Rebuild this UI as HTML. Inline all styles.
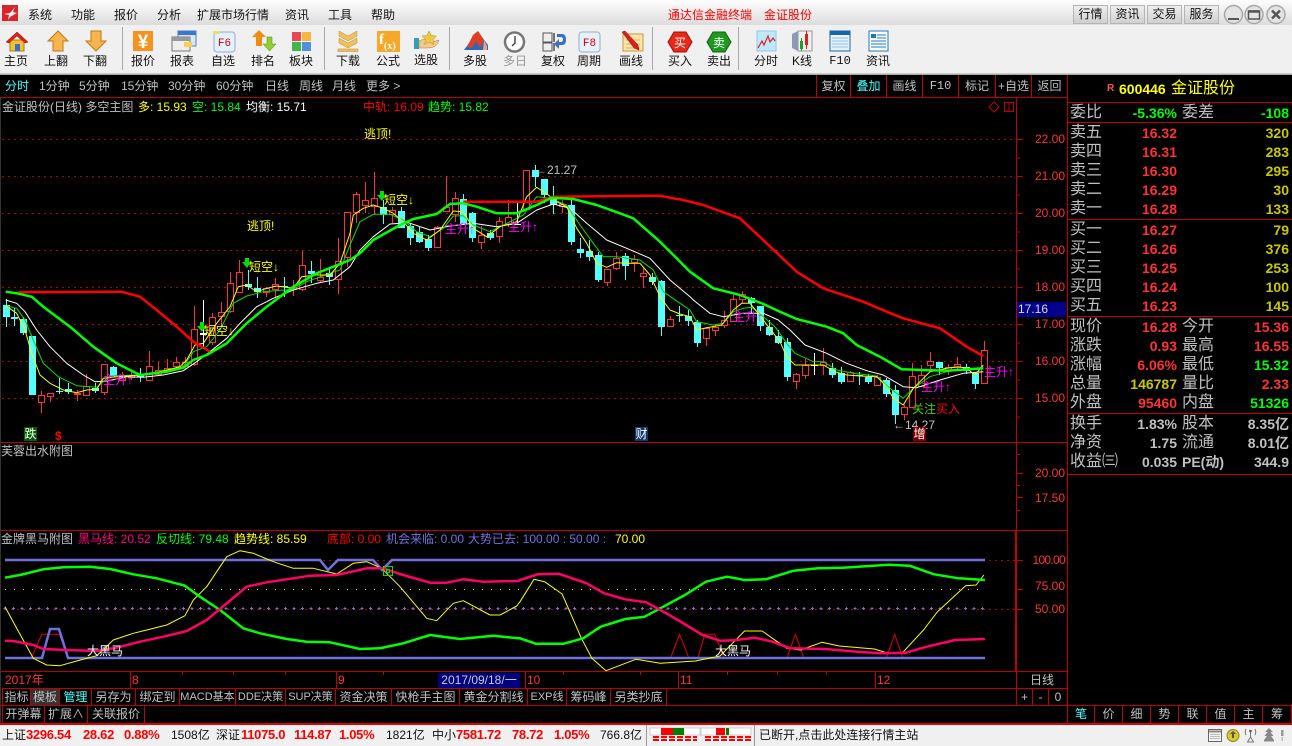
<!DOCTYPE html>
<html><head><meta charset="utf-8"><title>通达信金融终端</title>
<style>
html,body{margin:0;padding:0;background:#000;width:1292px;height:746px;overflow:hidden}
body{position:relative;font:12px "Liberation Sans","WenQuanYi Zen Hei","Noto Sans CJK SC",sans-serif;color:#c0c0c0}
.a{position:absolute}
.t{position:absolute;white-space:nowrap;line-height:16px;height:16px}
.r{text-align:right}
.c{text-align:center;transform:translateX(-50%)}
.h{background:#c00000;position:absolute}
.k{color:#111;font-size:12px}
.big{font-size:16px;color:#c0c0c0}
.n{font-size:14px;font-weight:bold;text-align:right}
.cell{position:absolute;text-align:center;line-height:17px;white-space:nowrap;border-right:1px solid #c00000;box-sizing:border-box}
.tb{color:#111;font-size:12px;transform:translateX(-50%)}
.ax{color:#ff3232;width:40px;text-align:right;left:1025px}
.m{color:#111;font-size:12px}
.s{color:#f00;font-weight:bold;font-size:13px;letter-spacing:-.3px}
.st{color:#111;font-size:12px}
.btn{position:absolute;top:5px;height:19px;box-sizing:border-box;border:1px solid #b4b4b4;background:linear-gradient(#eee,#d0d0d0);text-align:center;line-height:17px;color:#111}
</style></head><body>

<div class="a" style="left:0;top:0;width:1292px;height:25px;background:linear-gradient(#fefefe,#dcdcdc)"></div>
<div class="a" style="left:0;top:25px;width:1292px;height:47px;background:#f0f0f0"></div>
<div class="a" style="left:0;top:72px;width:1292px;height:3px;background:linear-gradient(#fff,#999)"></div>

<svg class="a" style="left:2px;top:5px" width="17" height="17"><rect width="16" height="16" fill="#d8262a"/><path d="M2 9 L8 8 L13 2 L11 7 L15 8 L8 12 L6 15 L7 10 Z" fill="#eee"/></svg>
<span class="t m" style="left:28px;top:7px">系统</span><span class="t m" style="left:71px;top:7px">功能</span><span class="t m" style="left:114px;top:7px">报价</span><span class="t m" style="left:157px;top:7px">分析</span><span class="t m" style="left:197px;top:7px">扩展市场行情</span><span class="t m" style="left:285px;top:7px">资讯</span><span class="t m" style="left:328px;top:7px">工具</span><span class="t m" style="left:371px;top:7px">帮助</span>
<span class="t" style="left:668px;top:7px;color:#f00">通达信金融终端</span><span class="t" style="left:764px;top:7px;color:#f00">金证股份</span>
<div class="btn" style="left:1073px;width:35px">行情</div><div class="btn" style="left:1110px;width:35px">资讯</div><div class="btn" style="left:1147px;width:35px">交易</div><div class="btn" style="left:1184px;width:35px">服务</div>
<svg class="a" style="left:1221px;top:3px" width="70" height="22">
<g fill="#e4e4e4" stroke="#a8a8a8" stroke-width="1.5"><circle cx="12.5" cy="11.500" r="9"/><circle cx="33" cy="11.500" r="9"/><circle cx="55" cy="11.500" r="9"/></g>
<path d="M7 16h11" stroke="#555" stroke-width="2"/><rect x="27.500" y="8" width="11" height="8" fill="none" stroke="#555" stroke-width="1.500"/><path d="M27.500 8.500h11" stroke="#555" stroke-width="2.500"/><path d="M51 7.500l8 8M59 7.500l-8 8" stroke="#555" stroke-width="2.500"/></svg>

<!-- toolbar icons -->
<svg class="a" style="left:0;top:25px" width="900" height="47">
<g stroke="#a8a8a8"><path d="M122.500 2v43M324.500 2v43M449.500 2v43M652.500 2v43M738.500 2v43"/></g>
<g transform="translate(6,6)"><rect x="4" y="9" width="14" height="11" fill="#f2c230" stroke="#a87a10"/><rect x="9" y="13" width="5" height="7" fill="#3b6fc0"/><path d="M0 11 L11 1 L22 11 L19 12 L11 5 L3 12Z" fill="#d8221e" stroke="#901010" stroke-width=".5"/></g>
<g transform="translate(47,6)"><path d="M11 0 L21 10 H16 V20 H6 V10 H1Z" fill="#fbb44c" stroke="#b87a20"/></g>
<g transform="translate(85,6)"><path d="M6 0 H16 V10 H21 L11 20 L1 10 H6Z" fill="#fbb44c" stroke="#b87a20"/></g>
<g transform="translate(133,6)"><rect width="20" height="20" fill="#f6921e"/><text x="10" y="17" font-size="19" font-weight="bold" fill="#fff" text-anchor="middle" font-family="Liberation Sans">¥</text></g>
<g transform="translate(172,6)"><rect x="6" y="0" width="18" height="15" fill="#d8e8f8" stroke="#4a80c0"/><rect x="6" y="0" width="18" height="4" fill="#3a78c8"/><rect x="0" y="6" width="18" height="14" fill="#eee" stroke="#777"/><rect x="0" y="6" width="18" height="4" fill="#999"/><rect x="12" y="11" width="8" height="5" fill="#f8d050"/></g>
<g transform="translate(213,6)"><rect x="1" y="1" width="21" height="20" rx="3" fill="#e4f0fc" stroke="#8ab0d8"/><text x="11.500" y="15" font-size="11" fill="#e00000" text-anchor="middle" font-family="Liberation Mono">F6</text><path d="M0 0h6v3h-6z" fill="#f0e060"/></g>
<g transform="translate(252,5)"><path d="M7 0 L14 7 H10 V16 H4 V7 H0Z" fill="#f08c10"/><path d="M15 7 H20 V14 H24 L17.500 21 L11 14 H15Z" fill="#90d030" stroke="#608010" stroke-width=".5"/></g>
<g transform="translate(292,7)"><rect width="9" height="9" fill="#e84850"/><rect x="10" width="9" height="9" fill="#f8b840"/><rect y="10" width="9" height="9" fill="#40b848"/><rect x="10" y="10" width="9" height="9" fill="#5090e0"/></g>
<g transform="translate(338,6)" fill="#f0c060" stroke="#c08820" stroke-width=".5"><path d="M1 0 L10 5 L19 0 V5 L10 10 L1 5Z"/><path d="M1 7 L10 12 L19 7 V12 L10 17 L1 12Z"/><rect x="0" y="18" width="20" height="2.500"/></g>
<g transform="translate(377,6)"><rect width="23" height="21" fill="#f8a828"/><text x="2" y="13" font-size="15" font-weight="bold" fill="#fff" font-family="Liberation Serif">f</text><text x="7" y="18" font-size="10" font-weight="bold" fill="#fff" font-family="Liberation Serif">(x)</text></g>
<g transform="translate(414,6)"><rect x="0" y="7" width="5" height="11" fill="#30a0b8"/><path d="M5 10 Q12 6 18 11 L25 9 Q23 17 14 17 L5 17Z" fill="#f0c890" stroke="#b08040" stroke-width=".5"/><path d="M15 0l2.500 4.500 5 .5-3.500 3.500 1 5-5-2.500-4.500 2.500 1-5-3.500-3.500 5-.5z" fill="#f0c840" stroke="#b89020" stroke-width=".5"/></g>
<g transform="translate(464,6)"><path d="M0 19 L8 8 L15 2 L24 14 V19Z" fill="#2868c0"/><path d="M3 16 L9 4 L14 0 L20 9 L16 17 L12 10 L8 17Z" fill="#e04020"/><path d="M20 9l3 6v4h-4z" fill="#f0a080"/></g>
<g transform="translate(504,6)"><circle cx="10.500" cy="11" r="9.500" fill="#fff" stroke="#777" stroke-width="2.500"/><path d="M11 5v7l-3 3" stroke="#333" fill="none" stroke-width="1.300"/></g>
<g transform="translate(542,6)"><rect x="1" y="2" width="9" height="9" fill="#eee" stroke="#555"/><rect x="11" y="2" width="2" height="9" fill="#777"/><rect x="1" y="12" width="9" height="8" fill="#eee" stroke="#555"/><rect x="11" y="12" width="2" height="8" fill="#777"/><path d="M15 3 H20 Q24 3 24 9 Q24 14 20 14 H17 V18 L12 13 L17 8 V11 H19 Q21 11 21 8 Q21 6 18 6 H15Z" fill="#3a70c0"/></g>
<g transform="translate(579,6)"><rect x="0" y="1" width="21" height="20" rx="3" fill="#e8f0fa" stroke="#8ab0d8"/><text x="10.500" y="15" font-size="11" fill="#e00000" text-anchor="middle" font-family="Liberation Mono">F8</text></g>
<g transform="translate(621,6)"><rect x="2" y="3" width="20" height="17" fill="#fbe6a8" stroke="#c89838"/><path d="M5 9h14M5 13h14M5 17h14" stroke="#d8b058"/><path d="M1 1 L4 0 L17 14 L18 19 L13 17Z" fill="#d82020" stroke="#801010" stroke-width=".5"/></g>
<g transform="translate(668,7)"><path d="M6 0H18L24 10L18 20H6L0 10Z" fill="#e82818" stroke="#a01008"/><text x="12" y="15" font-size="12" fill="#fff" text-anchor="middle">买</text></g>
<g transform="translate(707,7)"><path d="M6 0H18L24 10L18 20H6L0 10Z" fill="#209820" stroke="#106010"/><text x="12" y="15" font-size="12" fill="#fff" text-anchor="middle">卖</text></g>
<g transform="translate(757,6)"><rect width="19" height="20" fill="#bfe8fb" stroke="#90c8e8"/><path d="M1 17 L5 10 L7 14 L11 5 L13 11 L16 7 L18 10" fill="none" stroke="#e02020" stroke-width="1.200"/></g>
<g transform="translate(792,6)"><path d="M0 3 L6 0 V20 L0 17Z" fill="#8a9ab8"/><path d="M6 0 H20 V20 H6Z" fill="#f0f0f0" stroke="#999"/><rect x="8" y="10" width="3" height="8" fill="#20a020"/><path d="M9.500 7v13" stroke="#20a020"/><rect x="13" y="3" width="3" height="11" fill="#e02020"/><path d="M14.500 0v18" stroke="#e02020"/></g>
<g transform="translate(830,6)"><rect width="20" height="20" fill="#e8f2fc" stroke="#1a64a8"/><rect width="20" height="4" fill="#1a64a8"/><path d="M2 7h16M2 10h16M2 13h16M2 16h16" stroke="#8cc0e8"/></g>
<g transform="translate(869,6)"><rect width="19" height="20" fill="#fff" stroke="#1a78c0"/><rect x="2" y="3" width="5" height="4" fill="#1a78c0"/><path d="M8 4h9M8 7h9M2 10h15M2 13h15M2 16h15" stroke="#1a78c0"/></g>
</svg>
<span class="t tb" style="left:16px;top:53px">主页</span><span class="t tb" style="left:56px;top:53px">上翻</span><span class="t tb" style="left:95px;top:53px">下翻</span><span class="t tb" style="left:143px;top:53px">报价</span><span class="t tb" style="left:182px;top:53px">报表</span><span class="t tb" style="left:223px;top:53px">自选</span><span class="t tb" style="left:263px;top:53px">排名</span><span class="t tb" style="left:301px;top:53px">板块</span><span class="t tb" style="left:348px;top:53px">下载</span><span class="t tb" style="left:388px;top:53px">公式</span><span class="t tb" style="left:426px;top:52px">选股</span><span class="t tb" style="left:475px;top:53px">多股</span><span class="t tb" style="left:515px;top:53px;color:#999">多日</span><span class="t tb" style="left:553px;top:53px">复权</span><span class="t tb" style="left:589px;top:53px">周期</span><span class="t tb" style="left:631px;top:53px">画线</span><span class="t tb" style="left:680px;top:53px">买入</span><span class="t tb" style="left:719px;top:53px">卖出</span><span class="t tb" style="left:766px;top:53px">分时</span><span class="t tb" style="left:802px;top:53px">K线</span><span class="t tb" style="left:840px;top:53px;font-family:'Liberation Mono'">F10</span><span class="t tb" style="left:878px;top:53px">资讯</span>

<!-- tab bar -->
<span class="t" style="left:5px;top:78px;color:#4ff">分时</span><span class="t" style="left:39px;top:78px">1分钟</span><span class="t" style="left:79px;top:78px">5分钟</span><span class="t" style="left:121px;top:78px">15分钟</span><span class="t" style="left:168px;top:78px">30分钟</span><span class="t" style="left:216px;top:78px">60分钟</span><span class="t" style="left:265px;top:78px">日线</span><span class="t" style="left:299px;top:78px">周线</span><span class="t" style="left:332px;top:78px">月线</span><span class="t" style="left:366px;top:78px">更多 &gt;</span>
<div class="cell" style="left:816px;top:75px;width:35px;height:22px;line-height:22px;border-left:1px solid #c00000;">复权</div><div class="cell" style="left:851px;top:75px;width:36px;height:22px;line-height:22px;color:#4ff">叠加</div><div class="cell" style="left:887px;top:75px;width:36px;height:22px;line-height:22px">画线</div><div class="cell" style="left:923px;top:75px;width:36px;height:22px;line-height:22px;font-family:'Liberation Mono'">F10</div><div class="cell" style="left:959px;top:75px;width:37px;height:22px;line-height:22px">标记</div><div class="cell" style="left:996px;top:75px;width:36px;height:22px;line-height:22px">+自选</div><div class="cell" style="left:1032px;top:75px;width:36px;height:22px;line-height:22px">返回</div>

<svg id="ch" class="a" style="left:0;top:0" width="1292" height="746"></svg>

<!-- legends -->
<span class="t" style="left:2px;top:99px">金证股份(日线) 多空主图</span>
<span class="t" style="left:138px;top:99px;color:#ff0">多: 15.93</span><span class="t" style="left:192px;top:99px;color:#0f0">空: 15.84</span><span class="t" style="left:246px;top:99px;color:#fff">均衡: 15.71</span><span class="t" style="left:363px;top:99px;color:#f00">中轨: 16.09</span><span class="t" style="left:428px;top:99px;color:#0f0">趋势: 15.82</span>
<span class="t" style="left:364px;top:126px;color:#ff0">逃顶!</span><span class="t" style="left:247px;top:218px;color:#ff0">逃顶!</span>
<span class="t" style="left:249px;top:259px;color:#ff0">短空↓</span><span class="t" style="left:204px;top:323px;color:#ff0">短空↓</span><span class="t" style="left:384px;top:192px;color:#ff0">短空↓</span>
<span class="t" style="left:103px;top:372px;color:#f0f">主升↑</span><span class="t" style="left:445px;top:221px;color:#f0f">主升↑</span><span class="t" style="left:508px;top:219px;color:#f0f">主升↑</span><span class="t" style="left:733px;top:309px;color:#f0f">主升↑</span><span class="t" style="left:921px;top:379px;color:#f0f">主升↑</span><span class="t" style="left:984px;top:364px;color:#f0f">主升↑</span>
<span class="t" style="left:535px;top:162px;color:#c0c0c0">←21.27</span><span class="t" style="left:893px;top:417px;color:#c0c0c0">←14.27</span>
<span class="t" style="left:912px;top:401px;color:#f00">关注买入</span>
<span class="t" style="left:912px;top:401px;color:#0f0;width:24px;overflow:hidden;opacity:.8">关注</span>
<span class="t" style="left:24px;top:427px;background:#006000;color:#fff;width:13px;height:14px;line-height:14px;text-align:center">跌</span>
<span class="t" style="left:55px;top:428px;color:#f00;font-weight:bold">$</span>
<span class="t" style="left:635px;top:427px;background:#103870;color:#fff;width:13px;height:14px;line-height:14px;text-align:center">财</span>
<span class="t" style="left:913px;top:427px;background:#800000;color:#fff;width:13px;height:14px;line-height:14px;text-align:center">增</span>
<span class="t" style="left:1px;top:443px">芙蓉出水附图</span>
<span class="t" style="left:1px;top:531px">金牌黑马附图</span>
<span class="t" style="left:78px;top:531px;color:#ff0080">黑马线: 20.52</span><span class="t" style="left:156px;top:531px;color:#0f0">反切线: 79.48</span><span class="t" style="left:234px;top:531px;color:#ff0">趋势线: 85.59</span><span class="t" style="left:327px;top:531px;color:#f00">底部: 0.00</span><span class="t" style="left:386px;top:531px;color:#7070e0">机会来临: 0.00</span><span class="t" style="left:468px;top:531px;color:#7070e0">大势已去: 100.00 : 50.00 :</span><span class="t" style="left:615px;top:531px;color:#ff0">70.00</span>
<span class="t" style="left:87px;top:643px;color:#fff">大黑马</span><span class="t" style="left:715px;top:643px;color:#fff">大黑马</span>

<!-- axis labels -->
<span class="t ax" style="top:131px">22.00</span><span class="t ax" style="top:168px">21.00</span><span class="t ax" style="top:205px">20.00</span><span class="t ax" style="top:242px">19.00</span><span class="t ax" style="top:279px">18.00</span><span class="t ax" style="top:316px">17.00</span><span class="t ax" style="top:353px">16.00</span><span class="t ax" style="top:390px">15.00</span>
<span class="t ax" style="top:465px">20.00</span><span class="t ax" style="top:490px">17.50</span>
<span class="t ax" style="top:552px;letter-spacing:-.7px">100.00</span><span class="t ax" style="top:578px">75.00</span><span class="t ax" style="top:601px">50.00</span>
<div class="a" style="left:1017px;top:302px;width:49px;height:15px;background:#00008b;color:#ddd;line-height:15px;text-indent:1px">17.16</div>
<svg class="a" style="left:988px;top:101px" width="28" height="12"><path d="M1 6 L6 1 L11 6 L6 11Z" fill="none" stroke="#c00000"/><path d="M16.500 1.500h9v9h-9zM21 1.500v9" fill="none" stroke="#c00000"/></svg>

<!-- time axis -->
<span class="t" style="left:5px;top:672px;color:#ff3232">2017年</span><span class="t" style="left:132px;top:672px;color:#ff3232">8</span><span class="t" style="left:338px;top:672px;color:#ff3232">9</span><span class="t" style="left:527px;top:672px;color:#ff3232">10</span><span class="t" style="left:680px;top:672px;color:#ff3232">11</span><span class="t" style="left:877px;top:672px;color:#ff3232">12</span>
<div class="a" style="left:438px;top:673px;width:82px;height:15px;background:#000080;line-height:15px;color:#ccc;text-align:center;white-space:nowrap">2017/09/18/一</div>
<span class="t c" style="left:1042px;top:672px">日线</span>

<!-- bottom tabs -->
<div class="a" style="left:2px;top:688px;width:1065px;height:1px;background:#c00000"></div>
<div class="cell" style="left:2px;top:689px;width:29px;height:16px;line-height:16px;border-left:1px solid #c00000">指标</div><div class="cell" style="left:31px;top:689px;width:29px;height:16px;line-height:16px;background:#333">模板</div><div class="cell" style="left:60px;top:689px;width:32px;height:16px;line-height:16px;color:#4ff">管理</div><div class="cell" style="left:92px;top:689px;width:44px;height:16px;line-height:16px">另存为</div><div class="cell" style="left:136px;top:689px;width:44px;height:16px;line-height:16px">绑定到</div><div class="cell" style="left:180px;top:689px;width:56px;height:16px;line-height:16px;font-size:11px">MACD基本</div><div class="cell" style="left:236px;top:689px;width:50px;height:16px;line-height:16px;font-size:11px">DDE决策</div><div class="cell" style="left:286px;top:689px;width:50px;height:16px;line-height:16px;font-size:11px">SUP决策</div><div class="cell" style="left:336px;top:689px;width:56px;height:16px;line-height:16px">资金决策</div><div class="cell" style="left:392px;top:689px;width:68px;height:16px;line-height:16px">快枪手主图</div><div class="cell" style="left:460px;top:689px;width:68px;height:16px;line-height:16px">黄金分割线</div><div class="cell" style="left:528px;top:689px;width:39px;height:16px;line-height:16px;font-size:11px">EXP线</div><div class="cell" style="left:567px;top:689px;width:44px;height:16px;line-height:16px">筹码峰</div><div class="cell" style="left:611px;top:689px;width:56px;height:16px;line-height:16px">另类抄底</div>
<div class="cell" style="left:1016px;top:689px;width:17px;height:16px;line-height:16px;border-left:1px solid #c00000">+</div><div class="cell" style="left:1033px;top:689px;width:16px;height:16px;line-height:16px">-</div><div class="cell" style="left:1049px;top:689px;width:19px;height:16px;line-height:16px">0</div>
<div class="a" style="left:0;top:705px;width:1292px;height:1px;background:#c00000"></div>
<div class="cell" style="left:2px;top:706px;width:43px;height:17px;border-left:1px solid #c00000">开弹幕</div><div class="cell" style="left:45px;top:706px;width:43px;height:17px">扩展∧</div><div class="cell" style="left:88px;top:706px;width:57px;height:17px">关联报价</div>
<div class="cell" style="left:1067px;top:706px;width:28px;height:17px;border-left:1px solid #c00000;color:#4ff">笔</div><div class="cell" style="left:1095px;top:706px;width:28px;height:17px">价</div><div class="cell" style="left:1123px;top:706px;width:28px;height:17px">细</div><div class="cell" style="left:1151px;top:706px;width:28px;height:17px">势</div><div class="cell" style="left:1179px;top:706px;width:28px;height:17px">联</div><div class="cell" style="left:1207px;top:706px;width:28px;height:17px">值</div><div class="cell" style="left:1235px;top:706px;width:28px;height:17px">主</div><div class="cell" style="left:1263px;top:706px;width:29px;height:17px">筹</div>

<!-- right panel -->
<span class="t" style="left:1107px;top:81px;color:#ff5050;font-weight:bold;font-size:10px">R</span>
<span class="t" style="left:1119px;top:81px;color:#ff0;font-weight:bold;font-size:14px">600446</span><span class="t" style="left:1171px;top:81px;color:#ff0;font-size:16px">金证股份</span>
<span class="t big" style="left:1070px;top:105px">委比</span><span class="t n" style="left:1117px;width:60px;top:105px;color:#0f0">-5.36%</span><span class="t big" style="left:1182px;top:105px">委差</span><span class="t n" style="left:1240px;width:49px;top:105px;color:#0f0">-108</span>

<span class="t big" style="left:1070px;top:125px">卖五</span><span class="t n" style="left:1127px;width:50px;top:125px;color:#ff3232">16.32</span><span class="t n" style="left:1240px;width:49px;top:125px;color:#c8c800">320</span>
<span class="t big" style="left:1070px;top:144px">卖四</span><span class="t n" style="left:1127px;width:50px;top:144px;color:#ff3232">16.31</span><span class="t n" style="left:1240px;width:49px;top:144px;color:#c8c800">283</span>
<span class="t big" style="left:1070px;top:163px">卖三</span><span class="t n" style="left:1127px;width:50px;top:163px;color:#ff3232">16.30</span><span class="t n" style="left:1240px;width:49px;top:163px;color:#c8c800">295</span>
<span class="t big" style="left:1070px;top:182px">卖二</span><span class="t n" style="left:1127px;width:50px;top:182px;color:#ff3232">16.29</span><span class="t n" style="left:1240px;width:49px;top:182px;color:#c8c800">30</span>
<span class="t big" style="left:1070px;top:201px">卖一</span><span class="t n" style="left:1127px;width:50px;top:201px;color:#ff3232">16.28</span><span class="t n" style="left:1240px;width:49px;top:201px;color:#c8c800">133</span>
<span class="t big" style="left:1070px;top:222px">买一</span><span class="t n" style="left:1127px;width:50px;top:222px;color:#ff3232">16.27</span><span class="t n" style="left:1240px;width:49px;top:222px;color:#c8c800">79</span>
<span class="t big" style="left:1070px;top:241px">买二</span><span class="t n" style="left:1127px;width:50px;top:241px;color:#ff3232">16.26</span><span class="t n" style="left:1240px;width:49px;top:241px;color:#c8c800">376</span>
<span class="t big" style="left:1070px;top:260px">买三</span><span class="t n" style="left:1127px;width:50px;top:260px;color:#ff3232">16.25</span><span class="t n" style="left:1240px;width:49px;top:260px;color:#c8c800">253</span>
<span class="t big" style="left:1070px;top:279px">买四</span><span class="t n" style="left:1127px;width:50px;top:279px;color:#ff3232">16.24</span><span class="t n" style="left:1240px;width:49px;top:279px;color:#c8c800">100</span>
<span class="t big" style="left:1070px;top:298px">买五</span><span class="t n" style="left:1127px;width:50px;top:298px;color:#ff3232">16.23</span><span class="t n" style="left:1240px;width:49px;top:298px;color:#c8c800">145</span>

<span class="t big" style="left:1070px;top:319px">现价</span><span class="t n" style="left:1117px;width:60px;top:319px;color:#ff3232">16.28</span><span class="t big" style="left:1182px;top:319px">今开</span><span class="t n" style="left:1230px;width:59px;top:319px;color:#ff3232">15.36</span>
<span class="t big" style="left:1070px;top:338px">涨跌</span><span class="t n" style="left:1117px;width:60px;top:338px;color:#ff3232">0.93</span><span class="t big" style="left:1182px;top:338px">最高</span><span class="t n" style="left:1230px;width:59px;top:338px;color:#ff3232">16.55</span>
<span class="t big" style="left:1070px;top:357px">涨幅</span><span class="t n" style="left:1117px;width:60px;top:357px;color:#ff3232">6.06%</span><span class="t big" style="left:1182px;top:357px">最低</span><span class="t n" style="left:1230px;width:59px;top:357px;color:#0f0">15.32</span>
<span class="t big" style="left:1070px;top:376px">总量</span><span class="t n" style="left:1117px;width:60px;top:376px;color:#c8c800">146787</span><span class="t big" style="left:1182px;top:376px">量比</span><span class="t n" style="left:1230px;width:59px;top:376px;color:#ff3232">2.33</span>
<span class="t big" style="left:1070px;top:395px">外盘</span><span class="t n" style="left:1117px;width:60px;top:395px;color:#ff3232">95460</span><span class="t big" style="left:1182px;top:395px">内盘</span><span class="t n" style="left:1230px;width:59px;top:395px;color:#0f0">51326</span>

<span class="t big" style="left:1070px;top:416px">换手</span><span class="t n" style="left:1117px;width:60px;top:416px;color:#c0c0c0">1.83%</span><span class="t big" style="left:1182px;top:416px">股本</span><span class="t n" style="left:1230px;width:59px;top:416px;color:#c0c0c0">8.35亿</span>
<span class="t big" style="left:1070px;top:435px">净资</span><span class="t n" style="left:1117px;width:60px;top:435px;color:#c0c0c0">1.75</span><span class="t big" style="left:1182px;top:435px">流通</span><span class="t n" style="left:1230px;width:59px;top:435px;color:#c0c0c0">8.01亿</span>
<span class="t big" style="left:1070px;top:454px">收益㈢</span><span class="t n" style="left:1117px;width:60px;top:454px;color:#c0c0c0">0.035</span><span class="t" style="left:1182px;top:454px;font-size:14px;font-weight:bold">PE(动)</span><span class="t n" style="left:1230px;width:59px;top:454px;color:#c0c0c0">344.9</span>

<!-- status bar -->
<div class="a" style="left:0;top:723px;width:1292px;height:2px;background:#e00000"></div>
<div class="a" style="left:0;top:725px;width:1292px;height:21px;background:#f0f0f0"></div>
<span class="t st" style="left:2px;top:727px">上证</span><span class="t s" style="left:26px;top:727px">3296.54</span><span class="t s" style="left:83px;top:727px">28.62</span><span class="t s" style="left:124px;top:727px">0.88%</span><span class="t st" style="left:171px;top:727px">1508亿</span>
<span class="t st" style="left:216px;top:727px">深证</span><span class="t s" style="left:241px;top:727px">11075.0</span><span class="t s" style="left:294px;top:727px">114.87</span><span class="t s" style="left:339px;top:727px">1.05%</span><span class="t st" style="left:386px;top:727px">1821亿</span>
<span class="t st" style="left:432px;top:727px">中小</span><span class="t s" style="left:456px;top:727px">7581.72</span><span class="t s" style="left:512px;top:727px">78.72</span><span class="t s" style="left:554px;top:727px">1.05%</span><span class="t st" style="left:600px;top:727px">766.8亿</span>
<span class="t st" style="left:759px;top:727px">已断开,点击此处连接行情主站</span>
<svg class="a" style="left:0;top:725px" width="1292" height="21" shape-rendering="crispEdges">
<path d="M646.500 0v21M754.500 0v21" stroke="#999"/>
<rect x="650" y="3" width="50" height="7" fill="#fff" stroke="#ccc"/><rect x="661" y="3" width="12" height="7" fill="#f00"/><rect x="673" y="3" width="11" height="7" fill="#008000"/>
<rect x="701" y="3" width="50" height="7" fill="#fff" stroke="#ccc"/><rect x="716" y="3" width="9" height="7" fill="#f00"/><rect x="726" y="3" width="3" height="7" fill="#008000"/>
<g stroke="#f00" stroke-width="2"><path d="M653 12h44M653 15h44M705 12h46M705 15h46" stroke-dasharray="6 2"/></g>
<g shape-rendering="auto"><rect x="1208.500" y="4.500" width="13" height="12" fill="#f4f4f4" stroke="#666"/><path d="M1209 6.500h12" stroke="#888" stroke-width="2"/><path d="M1210 9.500h10M1210 11.500h10M1210 13.500h10" stroke="#bbb"/>
<circle cx="1233" cy="10.500" r="6" fill="#d8c830" stroke="#888820"/><path d="M1233 6l3 3h-2v4h-2V9h-2z" fill="#555"/>
<path d="M1250.500 7v5l-3 5h6l-3-5M1246 4q-1.500 3 0 6M1255 4q1.500 3 0 6" fill="none" stroke="#777"/><circle cx="1250.500" cy="6" r="1.300" fill="#555"/>
<path d="M1269 3l4 4h-2.500l3 4h-2.500l3 4h-10l3-4h-2.500l3-4h-2.500z" fill="#888"/><rect x="1264" y="15" width="10" height="1.500" fill="#888"/>
<rect x="1281" y="5" width="2.500" height="6" fill="#999"/><rect x="1281.500" y="12" width="1.500" height="4" fill="#bbb"/></g>
</svg>

<script>
(function(){
var o=[];
function L(x1,y1,x2,y2,c){o.push('<path d="M'+x1+' '+y1+'L'+x2+' '+y2+'" stroke="'+c+'" fill="none"/>');}
function pts(a,ox,oy,sx,sy){var r=[];for(var i=0;i<a.length;i++){r.push([ox+a[i][0]/sx,oy+a[i][1]/sy]);}return r;}
function mono(p){var r=[],last=-1;for(var i=0;i<p.length;i++){if(p[i][0]>last){r.push(p[i]);last=p[i][0];}}return r;}
function pl(p,c,w){var s=mono(p).map(function(q){return q[0].toFixed(1)+','+q[1].toFixed(1);});o.push('<polyline points="'+s.join(' ')+'" fill="none" stroke="'+c+'" stroke-width="'+w+'" stroke-linejoin="round"/>');}
function seg(z4,z5,z6){return pts(z4,0,100,3,3).concat(pts(z5,340,100,3,3),pts(z6,680,100,3,3));}
var RL='#c00000';
o.push('<g shape-rendering="crispEdges">');
L(0,97.5,1067,97.5,RL);L(0,442.5,1067,442.5,RL);L(0,530.5,1067,530.5,RL);L(0,671.5,1067,671.5,RL);
L(1016.5,97,1016.5,671,RL);L(1015.5,530,1015.5,671,RL);L(1067.5,75,1067.5,723,RL);L(0.5,97,0.5,723,'#333');
L(1016.5,671,1016.5,688,RL);
[102,122,219,316,413,474].forEach(function(y){L(1068,y+.5,1292,y+.5,RL);});
[139,176,213,250,287,324,361,398].forEach(function(y){
 o.push('<path d="M2 '+(y+.5)+'H1015" stroke="#b00000" stroke-dasharray="2 4"/>');
 L(1016,y+.5,1023,y+.5,RL);L(1016,y+19,1020,y+19,RL);
});
[473,497].forEach(function(y){L(1016,y+.5,1023,y+.5,RL);});
[454,485,510].forEach(function(y){L(1016,y+.5,1020,y+.5,RL);});
o.push('<path d="M5 560.500H1015" stroke="#b00000" stroke-dasharray="2 4"/>');
o.push('<path d="M5 589.500H985" stroke="#e0e000" stroke-dasharray="1 8"/>');
o.push('<path d="M5 609.500H1015" stroke="#b00000" stroke-dasharray="2 4"/>');
[[1016,560],[1016,589],[1016,609]].forEach(function(p){L(1016,p[1]+.5,1023,p[1]+.5,RL);});
[130,336,525,678,875].forEach(function(x){L(x+.5,672,x+.5,688,RL);});
[182,233,285,383,563,640,727,777,826].forEach(function(x){L(x+.5,672,x+.5,675,RL);});
var C=[[305,317,299,327,1],[317,319,308,326,1],[319,333,317,335,1],[336,395,336,395,1],[395,403,391,413,0],[393,397,393,402,0],[391,392,378,394,1],[389,392,383,394,1],[393,395,390,401,0],[386,396,374,396,0],[388,391,383,393,1],[364,393,364,395,0],[367,377,366,377,1],[376,381,372,381,0],[375,378,370,380,0],[374,377,368,382,1],[366,381,351,381,0],[370,375,362,375,0],[368,372,359,373,0],[362,367,357,369,0],[362,367,357,370,0],[329,365,306,366,0],[333,335,300,347,2],[317,343,313,345,0],[312,317,302,327,0],[283,312,272,313,0],[272,293,260,293,0],[284,287,270,290,1],[288,292,277,298,1],[288,293,287,297,0],[284,290,278,297,0],[286,287,277,297,1],[287,290,280,296,0],[265,290,251,291,0],[271,274,261,283,1],[277,281,259,282,0],[273,277,268,285,1],[261,280,238,294,0],[212,258,212,267,0],[194,213,192,223,0],[200,206,182,213,0],[198,207,172,215,0],[207,215,200,224,1],[210,215,207,223,0],[211,228,207,228,1],[226,238,223,245,1],[232,242,227,243,1],[239,248,235,251,1],[227,248,226,248,0],[207,212,176,212,0],[198,215,192,222,0],[199,224,194,225,1],[213,238,212,242,1],[235,243,226,249,0],[233,238,230,240,1],[221,237,217,243,0],[217,225,200,227,0],[224,225,203,225,2],[170,210,170,210,0],[170,177,165,187,1],[179,195,179,203,1],[198,205,186,214,1],[204,207,200,213,0],[205,242,198,245,1],[249,253,238,258,1],[251,257,240,261,1],[255,280,252,282,1],[269,283,269,286,0],[258,269,252,270,0],[256,266,253,280,1],[259,263,255,272,0],[273,277,268,288,0],[277,282,273,285,1],[281,327,280,336,1],[319,327,316,327,0],[315,316,306,322,1],[316,321,310,326,1],[322,343,320,347,1],[328,339,327,346,0],[327,331,325,336,0],[320,326,311,328,0],[299,322,295,322,0],[294,300,291,303,0],[298,303,297,313,1],[306,326,306,331,1],[327,335,320,336,1],[336,343,330,344,1],[342,377,338,381,1],[374,382,373,389,0],[365,376,359,379,0],[365,366,353,375,2],[362,366,348,375,0],[368,375,363,378,1],[373,382,367,384,1],[372,382,371,382,0],[375,376,372,385,1],[377,382,374,384,1],[377,386,375,386,0],[380,394,378,397,1],[390,415,385,424,1],[407,415,405,420,0],[376,408,363,408,0],[375,387,365,387,0],[361,366,352,372,0],[362,368,362,375,1],[367,371,364,375,0],[364,368,357,370,0],[367,371,364,374,1],[373,384,372,389,1],[350,384,341,384,0]];
C.forEach(function(c,i){
 var x=Math.round(5.5+i*8.98),col=c[4]==0?'#ff3232':c[4]==1?'#54ffff':'#fff';
 L(x+.5,c[2],x+.5,c[0],col);L(x+.5,c[1],x+.5,c[3],col);
 if(c[4]==0)o.push('<rect x="'+(x-3+.5)+'" y="'+(c[0]+.5)+'" width="6" height="'+Math.max(c[1]-c[0]-1,1)+'" fill="#000" stroke="'+col+'"/>');
 else o.push('<rect x="'+(x-3)+'" y="'+c[0]+'" width="7" height="'+Math.max(c[1]-c[0],1)+'" fill="'+col+'"/>');
});
o.push('</g>');
var white=seg([[17,600],[50,610],[75,635],[110,690],[150,740],[200,790],[250,825],[285,845],[320,843],[380,830],[430,832],[490,825],[550,812],[590,785],[630,755],[680,715],[720,670],[770,620],[820,595],[880,570],[950,550],[1000,540],[1050,500]],
[[0,510],[30,480],[60,450],[100,410],[150,372],[205,368],[270,390],[330,378],[400,370],[470,380],[530,370],[590,330],[640,312],[690,325],[740,370],[800,420],[860,445],[930,475],[990,540],[1050,590]],
[[0,568],[40,600],[90,640],[130,650],[190,640],[250,640],[295,660],[330,690],[375,735],[440,760],[500,790],[560,812],[610,825],[670,860],[710,863],[780,840],[850,820],[910,815]]);
pl(white,'#fff',1);
var gt=seg([[17,617],[50,625],[75,660],[100,720],[130,790],[175,830],[230,857],[290,862],[330,828],[420,825],[500,810],[550,800],[580,755],[620,740],[660,690],[700,610],[740,588],[790,575],[880,568],[920,545],[990,520],[1020,510],[1050,435]],
[[0,480],[30,400],[60,365],[100,343],[150,343],[190,360],[230,395],[270,410],[310,385],[340,348],[370,347],[400,375],[450,395],[500,370],[550,345],[590,290],[630,295],[680,315],[720,375],[760,430],[790,470],[830,470],[900,480],[940,510],[970,575],[1020,610],[1050,630]],
[[0,620],[25,630],[50,665],[100,675],[130,670],[160,635],[190,625],[215,622],[250,650],[285,680],[320,730],[345,760],[400,785],[430,785],[470,810],[520,820],[590,828],[630,865],[670,895],[700,865],[750,830],[800,815],[860,808],[910,805]]);
pl(gt,'#00e000',1);
var yl=seg([[17,617],[50,640],[75,690],[95,760],[120,825],[150,850],[190,870],[230,878],[260,870],[290,868],[310,835],[350,830],[420,825],[480,815],[540,800],[560,780],[585,735],[610,730],[650,670],[690,620],[715,560],[740,555],[770,575],[800,565],[830,558],[880,565],[905,530],[950,525],[990,525],[1020,490],[1050,400]],
[[0,475],[40,345],[70,325],[100,315],[130,325],[160,340],[190,365],[220,400],[260,420],[300,390],[340,333],[370,335],[400,385],[440,410],[480,380],[530,365],[560,290],[590,262],[625,285],[650,305],[680,320],[710,385],[740,430],[770,490],[800,502],[830,488],[860,490],[900,490],[930,525],[960,590],[990,630],[1020,642],[1050,650]],
[[0,640],[25,650],[50,690],[80,683],[125,675],[160,630],[185,610],[210,610],[235,640],[265,680],[300,725],[320,770],[345,795],[400,795],[430,795],[465,815],[500,825],[540,828],[590,830],[620,860],[640,895],[670,915],[700,865],[750,815],[800,805],[835,800],[860,805],[885,825],[910,795]]);
pl(yl,'#ff0',1);
pl(pts([[55,577],[365,575],[420,590],[470,630],[530,680],[580,725],[630,755]],0,100,3,3),'#f00',2.5);
pl(pts([[370,305],[590,305],[640,290],[960,287],[1010,297]],340,100,3,3).concat(pts([[0,298],[70,315],[180,355],[260,430],[350,515],[430,565],[550,605],[620,635],[670,655],[780,685],[860,740],[910,768]],680,100,3,3)),'#f00',2.5);
var tg=seg([[17,575],[50,580],[95,590],[130,620],[210,680],[280,740],[350,790],[420,825],[500,815],[550,803],[580,780],[620,765],[680,730],[740,670],[800,620],[880,560],[950,520],[1050,480]],
[[60,460],[100,420],[180,375],[220,357],[290,342],[330,312],[370,310],[410,320],[470,340],[530,340],[590,315],[635,293],[700,297],[770,315],[840,340],[880,355],[960,425],[1010,475],[1050,515]],
[[30,515],[100,565],[180,585],[250,612],[300,635],[350,657],[440,680],[490,700],[530,735],[600,770],[665,808],[800,812],[910,805]]);
pl(tg,'#00ff00',2.5);
[[246,262],[201,326],[381,195]].forEach(function(p){o.push('<path d="M'+(p[0]-1)+' '+(p[1]-4)+'h4v4h2l-4 6-5-6h3z" fill="#00e000"/>');});
function p7(a){return pts(a,0,525,3,3);}
function p8(a){return pts(a,520,525,2.85,3);}
pl(p7([[95,398],[125,328],[178,328],[205,398]]),'#e00000',1);
[[[430,395],[455,328],[480,395]],[[508,395],[527,328],[555,328],[580,395]],[[762,395],[785,328],[808,395]],[[1045,395],[1068,328],[1090,395]]].forEach(function(t){pl(p8(t),'#e00000',1);});
for(var x=5;x<985;x+=8.5){o.push('<path d="M'+x.toFixed(1)+' 607v3M'+(x-1.5).toFixed(1)+' 608.500h3" stroke="#7070e0"/>');}
o.push('<path d="M5 560H320L328 570L338 560H373L382 570L392 560H985" fill="none" stroke="#7070e0" stroke-width="2.5"/>');
o.push('<path d="M5 658H42L50 629H59L68 658H985" fill="none" stroke="#7070e0" stroke-width="2.5"/>');
pl(p7([[15,245],[50,310],[100,400],[140,420],[180,422],[230,408],[290,392],[340,345],[400,325],[440,315],[500,300],[555,272],[580,225],[620,185],[680,95],[720,77],[760,85],[820,110],[880,130],[940,130],[1010,147],[1060,115],[1100,110],[1145,130],[1200,185],[1280,280],[1310,287],[1360,235],[1390,227],[1470,270],[1500,270],[1550,243]]).concat(p8([[0,230],[40,163],[70,170],[120,207],[175,340],[205,400],[245,437],[330,403],[400,415],[500,408],[570,393],[640,318],[690,318],[760,370],[800,375],[860,352],[910,363],[1010,372],[1050,385],[1090,383],[1150,315],[1190,260],[1270,182],[1300,180],[1322,150]])),'#ff0',1);
pl(p7([[15,158],[60,150],[130,133],[190,127],[270,125],[330,132],[400,148],[470,160],[555,182],[600,215],[660,255],[730,310],[780,325],[860,342],[920,350],[990,352],[1080,372],[1140,370],[1210,355],[1290,330],[1380,342],[1480,332],[1555,340]]).concat(p8([[0,340],[45,356],[125,356],[180,340],[230,305],[300,282],[355,275],[400,250],[470,210],[530,170],[590,155],[640,165],[700,163],[780,137],[850,130],[920,128],[1050,119],[1110,122],[1180,148],[1250,160],[1325,165]])),'#00ff00',2.5);
pl(p7([[15,347],[40,348],[100,360],[130,372],[200,375],[290,378],[350,368],[420,350],[490,335],[560,318],[620,285],[680,235],[740,185],[800,172],[860,163],[930,152],[1010,150],[1100,130],[1150,130],[1200,147],[1290,173],[1340,173],[1390,163],[1450,170],[1555,168]]).concat(p8([[0,165],[50,148],[110,146],[190,175],[240,205],[300,223],[360,232],[400,255],[450,285],[520,330],[570,347],[610,346],[670,338],[720,350],[770,370],[870,372],[960,380],[1030,385],[1100,383],[1160,365],[1240,345],[1325,342]])),'#ff0068',2.5);
o.push('<rect x="383.500" y="566.500" width="9" height="9" fill="none" stroke="#00e000"/><rect x="386.500" y="569.500" width="3" height="3" fill="none" stroke="#00e000"/>');
document.getElementById('ch').innerHTML=o.join('');
})();
</script>
</body></html>
